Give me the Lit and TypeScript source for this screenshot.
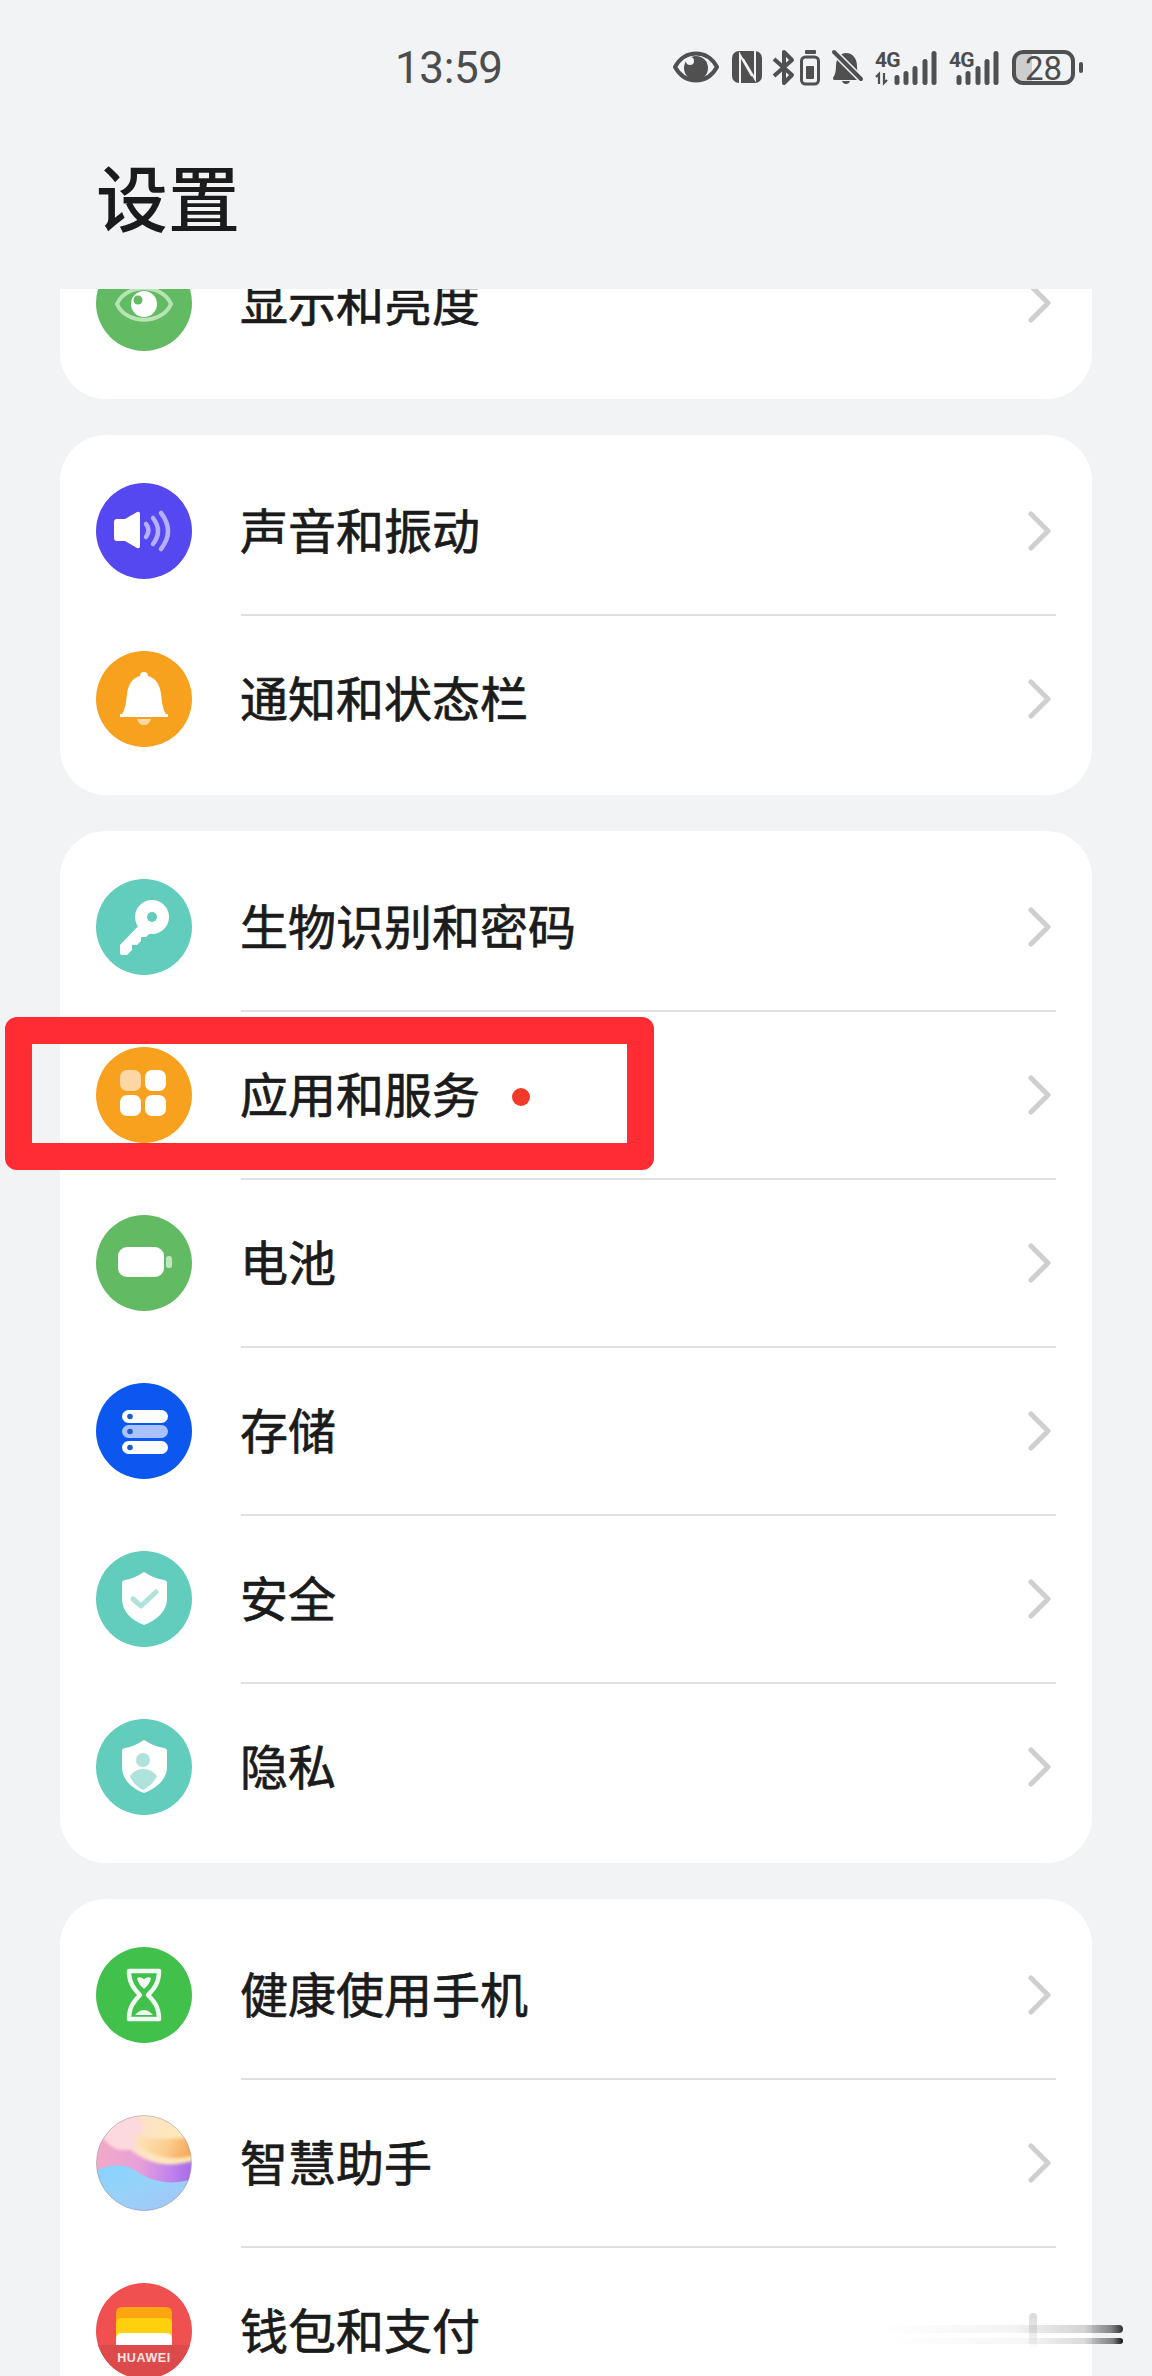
import { LitElement, html, css, svg, TemplateResult } from "lit";
import { customElement } from "lit/decorators.js";

const shieldPath =
  "M48 21C54 25 62 28 68 29Q71 29.5 71 32V48C71 60 61 69 48 74C35 69 26 60 26 48V32Q26 29.5 29 29C35 28 42 25 48 21Z";

const disc = (color: string, inner: TemplateResult) => html`<svg class="icon" viewBox="0 0 96 96">
  <circle cx="48" cy="48" r="48" fill=${color}></circle>${inner}
</svg>`;

const icons: Record<string, () => TemplateResult> = {
  display: () =>
    disc(
      "#62ba62",
      svg`<path d="M21 49C30 28 66 28 75 49C66 70 30 70 21 49Z" fill="none" stroke="#b6e4b2" stroke-width="4"/>
      <circle cx="48" cy="49" r="13" fill="#fff"/><circle cx="42" cy="45" r="4.5" fill="#62ba62"/>`
    ),
  sound: () =>
    disc(
      "#5548f0",
      svg`<path d="M21 36H29L41 29Q44 28 44 31V63Q44 66 41 65L29 58H21Q18 58 18 55V39Q18 36 21 36Z" fill="#fff"/>
      <g fill="none" stroke="#b5b0fb" stroke-width="4.5" stroke-linecap="round">
      <path d="M50 41Q55 47 50 54"/><path d="M57 35Q67 48 57 61"/><path d="M65 30Q79 48 65 66"/></g>`
    ),
  bell: () =>
    disc(
      "#f8a11e",
      svg`<path d="M48 21A4 4 0 0 1 52 25C60 27 64 34 65 43C66 52 67 59 70 63H72V66H24V63H26C29 59 30 52 31 43C32 34 36 27 44 25A4 4 0 0 1 48 21Z" fill="#fff"/>
      <path d="M41 68H55Q53 74 48 74Q43 74 41 68Z" fill="#fdd9a6"/>`
    ),
  key: () =>
    disc(
      "#62ccbd",
      svg`<circle cx="56" cy="38" r="17" fill="#fff"/><circle cx="56" cy="38" r="5" fill="#62ccbd"/>
      <path d="M47 42L24 66V74Q24 76 26 76H31L36 71V66H41L45 62V58H50L56 52Z" fill="#fff"/>`
    ),
  apps: () =>
    disc(
      "#f8a11e",
      svg`<rect x="24" y="23" width="21" height="21" rx="7" fill="#fdd7a3"/>
      <rect x="49" y="23" width="21" height="21" rx="7" fill="#fff"/>
      <rect x="24" y="48" width="21" height="21" rx="7" fill="#fff"/>
      <rect x="49" y="48" width="21" height="21" rx="7" fill="#fff"/>`
    ),
  battery: () =>
    disc(
      "#62ba62",
      svg`<rect x="22" y="32" width="46" height="30" rx="9" fill="#fff"/>
      <rect x="70" y="41" width="6" height="12" rx="2.5" fill="#c0e6bd"/>`
    ),
  storage: () =>
    disc(
      "#0c57f0",
      svg`<rect x="26" y="27" width="46" height="13" rx="6.5" fill="#fff"/>
      <rect x="26" y="42" width="46" height="13" rx="6.5" fill="#a9c2fb"/>
      <rect x="26" y="58" width="46" height="13" rx="6.5" fill="#fff"/>
      <circle cx="34" cy="33.5" r="2.8" fill="#1d5cc4"/><circle cx="34" cy="48.5" r="2.8" fill="#1d5cc4"/><circle cx="34" cy="64.5" r="2.8" fill="#1d5cc4"/>`
    ),
  security: () =>
    disc(
      "#62ccbd",
      svg`<path d=${shieldPath} fill="#fff"/>
      <path d="M37 48L45 55L60 41" fill="none" stroke="#aee2da" stroke-width="5" stroke-linecap="round" stroke-linejoin="round"/>`
    ),
  privacy: () =>
    disc(
      "#62ccbd",
      svg`<path d=${shieldPath} fill="#fff"/><circle cx="47" cy="41" r="7" fill="#aee2da"/>
      <path d="M47 50C53 50 58 53 61 57C58 63 53 68 47 71C41 68 36 63 34 57C37 53 41 50 47 50Z" fill="#aee2da"/>`
    ),
  health: () =>
    disc(
      "#41c14c",
      svg`<path d="M33 24H63C63 36 58 42 52 48C58 54 63 60 63 72H33C33 60 38 54 44 48C38 42 33 36 33 24Z" fill="none" stroke="#f1fbf1" stroke-width="4.5" stroke-linejoin="round"/>
      <path d="M41 31Q44 29 48 32Q52 29 55 31Q54 37 48 42Q42 37 41 31Z" fill="#f1fbf1"/>
      <path d="M39 68Q48 58 57 68Z" fill="#f1fbf1"/>`
    ),
  celia: () => html`<svg class="icon" viewBox="0 0 96 96">
    <defs>
      <clipPath id="orb"><circle cx="48" cy="48" r="47.5"></circle></clipPath>
      <filter id="soft" x="-20%" y="-20%" width="140%" height="140%"><feGaussianBlur stdDeviation="1.6"></feGaussianBlur></filter>
      <linearGradient id="orbBase" x1="0" y1="0" x2="1" y2="0.15">
        <stop offset="0" stop-color="#f7bdd2"></stop><stop offset="0.5" stop-color="#fde3c6"></stop><stop offset="1" stop-color="#fdeab6"></stop>
      </linearGradient>
      <linearGradient id="orbOrange" x1="0" y1="0" x2="1" y2="0.2">
        <stop offset="0" stop-color="#fde6bf"></stop><stop offset="0.6" stop-color="#fbcf8f"></stop><stop offset="1" stop-color="#f6a95c"></stop>
      </linearGradient>
      <linearGradient id="orbBand" x1="0" y1="0" x2="1" y2="0">
        <stop offset="0" stop-color="#f4a9c8"></stop><stop offset="0.45" stop-color="#e6a0d8"></stop><stop offset="0.8" stop-color="#bd80ee"></stop><stop offset="1" stop-color="#a56ae8"></stop>
      </linearGradient>
      <linearGradient id="orbBlue" x1="0" y1="0" x2="0.8" y2="1">
        <stop offset="0" stop-color="#86d4fb"></stop><stop offset="0.5" stop-color="#97d2fa"></stop><stop offset="1" stop-color="#a6c4f6"></stop>
      </linearGradient>
    </defs>
    <g clip-path="url(#orb)">
      <rect width="96" height="96" fill="url(#orbBase)"></rect>
      <path d="M0 26C14 24 26 28 36 36C50 47 70 54 96 46V70H0Z" fill="url(#orbBand)" filter="url(#soft)"></path>
      <circle cx="27" cy="15" r="20" fill="#fbd9de" filter="url(#soft)"></circle>
      <path d="M38 18C48 26 74 24 100 22V40C84 45 66 44 52 37C44 33 39 26 38 18Z" fill="url(#orbOrange)" filter="url(#soft)"></path>
      <path d="M-4 58C12 48 28 48 40 56C54 66 76 72 100 63V100H-4Z" fill="url(#orbBlue)"></path>
    </g>
    <circle cx="48" cy="48" r="47.5" fill="none" stroke="#8a8aa0" stroke-opacity="0.45" stroke-width="1"></circle>
  </svg>`,
  wallet: () => html`<svg class="icon" viewBox="0 0 96 96">
    <defs><clipPath id="wal"><circle cx="48" cy="48" r="48"></circle></clipPath></defs>
    <g clip-path="url(#wal)">
      <rect width="96" height="96" fill="#f0504f"></rect>
      <rect y="62" width="96" height="34" fill="#dd4a4c"></rect>
      <path d="M20 62V30Q20 24 26 24H70Q76 24 76 30V62Z" fill="#fea50f"></path>
      <path d="M20 62V41Q20 35 26 35H70Q76 35 76 41V62Z" fill="#ffd00e"></path>
      <path d="M20 62V56Q20 50 26 50H70Q76 50 76 56V62Z" fill="#fff"></path>
      <text x="48" y="79" text-anchor="middle" class="hw">HUAWEI</text>
    </g>
  </svg>`,
};

interface Row {
  icon: string;
  label: string;
  dot?: boolean;
  smudged?: boolean;
}

const cards: Row[][] = [
  [{ icon: "display", label: "显示和亮度" }],
  [
    { icon: "sound", label: "声音和振动" },
    { icon: "bell", label: "通知和状态栏" },
  ],
  [
    { icon: "key", label: "生物识别和密码" },
    { icon: "apps", label: "应用和服务", dot: true },
    { icon: "battery", label: "电池" },
    { icon: "storage", label: "存储" },
    { icon: "security", label: "安全" },
    { icon: "privacy", label: "隐私" },
  ],
  [
    { icon: "health", label: "健康使用手机" },
    { icon: "celia", label: "智慧助手" },
    { icon: "wallet", label: "钱包和支付", smudged: true },
  ],
];

const bars = (xs: number[]) => {
  const tops = [75, 71, 66, 59, 51];
  return xs.map(
    (x, i) => svg`<rect x=${x - 2.5} y=${tops[i]} width="5" height=${85 - tops[i]} rx="2.5"/>`
  );
};

@customElement("app-root")
export class AppRoot extends LitElement {
  static styles = css`
    :host {
      display: block;
      position: relative;
      width: 1152px;
      height: 2376px;
      overflow: hidden;
      background: #f1f3f5;
      font-family: "Noto Sans CJK SC", "Noto Sans", sans-serif;
      color: #1b1b1b;
    }
    .page {
      display: flex;
      flex-direction: column;
      height: 2376px;
    }
    .status {
      display: flex;
      align-items: center;
      justify-content: space-between;
      height: 48px;
      margin-top: 44px;
      padding: 0 68px 0 395px;
      color: #4d4d4d;
    }
    .time {
      font-family: Roboto, sans-serif;
      font-size: 44px;
      font-weight: 400;
      line-height: 48px;
      letter-spacing: -0.4px;
    }
    .status-icons {
      width: 411px;
      height: 40px;
      display: block;
    }
    .status-icons text {
      font-family: Roboto, sans-serif;
      fill: #4d4d4d;
    }
    .status-icons .g4 {
      font-size: 21px;
      font-weight: 700;
      letter-spacing: -0.8px;
    }
    .status-icons .lvl {
      font-size: 33px;
      font-weight: 400;
    }
    .header {
      height: 197px;
      padding: 67px 0 0 96px;
      box-sizing: border-box;
    }
    h1 {
      margin: 0;
      font-size: 72px;
      line-height: 72px;
      font-weight: 500;
      color: #1b1b1b;
    }
    .list {
      flex: 1;
      min-height: 0;
      overflow: hidden;
      display: flex;
      flex-direction: column;
      gap: 36px;
      padding: 0 60px;
    }
    .card {
      flex: none;
      background: #fff;
      border-radius: 46px;
      padding: 12px 0;
    }
    .card:first-child {
      margin-top: -82px;
    }
    .row {
      display: flex;
      align-items: center;
      height: 168px;
      padding: 0 36px;
      gap: 49px;
    }
    .icon {
      flex: none;
      display: block;
      width: 96px;
      height: 96px;
    }
    .hw {
      font-family: "Liberation Sans", sans-serif;
      font-size: 12.5px;
      font-weight: 700;
      letter-spacing: 0.6px;
      fill: #fbe6e4;
    }
    .body {
      flex: 1;
      align-self: stretch;
      display: flex;
      align-items: center;
      box-sizing: border-box;
      border-bottom: 2px solid #dfe0e1;
      margin-bottom: -1px;
      font-size: 48px;
      font-weight: 400;
      -webkit-text-stroke: 0.7px #1b1b1b;
    }
    .row:last-child .body {
      border-bottom-color: transparent;
    }
    .label {
      line-height: 60px;
      margin: -6px 0 0 -1px;
    }
    .dot {
      width: 18px;
      height: 18px;
      border-radius: 50%;
      background: #f23a28;
      margin: 5px 0 0 32px;
    }
    .chev {
      display: block;
      width: 24px;
      height: 40px;
      margin: 0 4px 0 auto;
    }
    .ghost {
      width: 8px;
      height: 36px;
      margin: 0 19px 0 auto;
      border-radius: 4px 4px 0 0;
      background: linear-gradient(#d9d9d9, #f4f4f4 80%, #fff);
    }
    .mark {
      position: absolute;
      left: 5px;
      top: 1017px;
      width: 649px;
      height: 153px;
      box-sizing: border-box;
      border: 27px solid #ff2d33;
      border-radius: 12px;
    }
    .stroke {
      position: absolute;
      left: 880px;
      width: 243px;
      border-radius: 0 4px 4px 0;
    }
    .stroke.a {
      top: 2325px;
      height: 8px;
      background: linear-gradient(90deg, rgba(60, 60, 60, 0), rgba(60, 60, 60, 0.06) 55%, rgba(60, 60, 60, 0.22) 84%, rgba(60, 60, 60, 0.6) 95%, #333);
    }
    .stroke.b {
      top: 2338px;
      height: 6px;
      background: linear-gradient(90deg, rgba(30, 30, 30, 0), rgba(30, 30, 30, 0.04) 60%, rgba(30, 30, 30, 0.16) 84%, rgba(30, 30, 30, 0.55) 96%, #111);
    }
  `;

  private statusIcons() {
    return html`<svg class="status-icons" viewBox="673 48 411 40" fill="#505050">
      <path d="M675 67C685 49 707 49 717 67C707 85 685 85 675 67Z" fill="none" stroke="#505050" stroke-width="4" stroke-linejoin="round"></path>
      <circle cx="696" cy="68" r="12"></circle>
      <circle cx="690" cy="61" r="4" fill="#f1f3f5"></circle>

      <rect x="732" y="51" width="30" height="32" rx="7"></rect>
      <g fill="none" stroke="#f1f3f5" stroke-width="2">
        <path d="M740 84V55L752 76"></path>
        <path d="M755 50V79L743 59"></path>
      </g>

      <g fill="none" stroke="#505050" stroke-width="4" stroke-linejoin="round">
        <path d="M774 59L792 75L784 83V70"></path>
        <path d="M774 76L792 60L784 52V65"></path>
      </g>

      <rect x="805" y="50" width="11" height="4" rx="1"></rect>
      <rect x="801.5" y="57" width="17" height="27" rx="4" fill="none" stroke="#505050" stroke-width="3"></rect>
      <rect x="806" y="66" width="8" height="13" rx="1"></rect>

      <path d="M846 53C853 53 857 59 857 66C857 71 858 75 861 78H833C835 75 836 71 836 66C836 59 840 53 846 53Z"></path>
      <rect x="833" y="77" width="28" height="3" rx="1.5"></rect>
      <path d="M842 81H850Q849 84 846 84Q843 84 842 81Z"></path>
      <path d="M833 51L863 81" stroke="#f1f3f5" stroke-width="7"></path>
      <path d="M834 52L861 79" stroke="#505050" stroke-width="4" stroke-linecap="round"></path>

      <text x="875" y="67" class="g4">4G</text>
      <path d="M879 84V74L876 77M884 73V83L887 80" fill="none" stroke="#505050" stroke-width="2.2"></path>
      ${bars([897, 906, 915, 925, 934])}

      <text x="949" y="67" class="g4">4G</text>
      ${bars([959, 968, 978, 987, 996])}

      <path d="M1024 52H1032V83H1024Q1014 83 1014 73V62Q1014 52 1024 52Z" fill="#cdcdcd"></path>
      <rect x="1014" y="52" width="59" height="31" rx="9" fill="none" stroke="#505050" stroke-width="4"></rect>
      <rect x="1079" y="62" width="4" height="11" rx="2"></rect>
      <text x="1043.5" y="79.5" text-anchor="middle" class="lvl">28</text>
    </svg>`;
  }

  private renderRow(r: Row) {
    return html`<div class="row">
      ${icons[r.icon]()}
      <div class="body">
        <span class="label">${r.label}</span>
        ${r.dot ? html`<span class="dot"></span>` : ""}
        ${r.smudged
          ? html`<span class="ghost"></span>`
          : html`<svg class="chev" viewBox="0 0 24 40">
              <path d="M3 3L20 20L3 37" fill="none" stroke="#cfcfcf" stroke-width="5" stroke-linecap="round" stroke-linejoin="round"></path>
            </svg>`}
      </div>
    </div>`;
  }

  render() {
    return html`<div class="page">
        <div class="status">
          <span class="time">13:59</span>
          ${this.statusIcons()}
        </div>
        <div class="header"><h1>设置</h1></div>
        <div class="list">
          ${cards.map((c) => html`<div class="card">${c.map((r) => this.renderRow(r))}</div>`)}
        </div>
      </div>
      <div class="mark"></div>
      <div class="stroke a"></div>
      <div class="stroke b"></div>`;
  }
}
